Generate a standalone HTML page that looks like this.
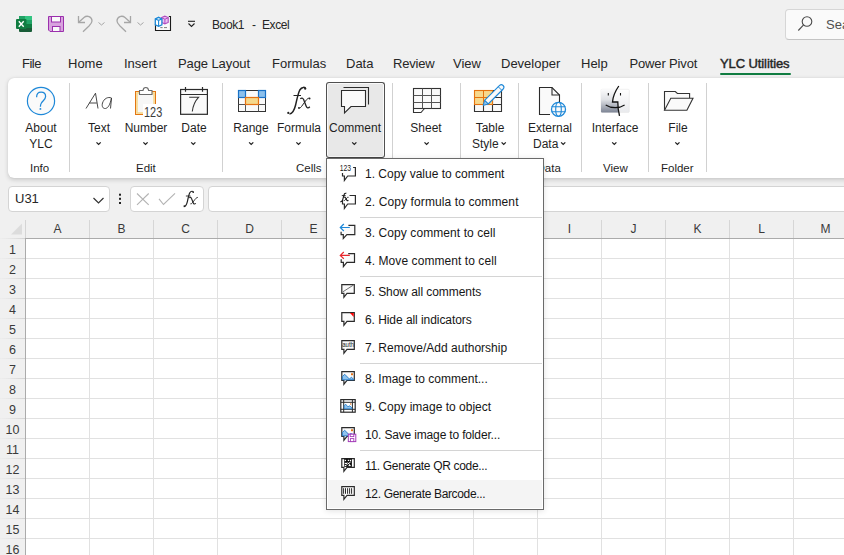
<!DOCTYPE html>
<html><head><meta charset="utf-8">
<style>
*{margin:0;padding:0;box-sizing:border-box}
html,body{width:844px;height:555px;overflow:hidden;background:#f0f0f0;font-family:"Liberation Sans",sans-serif;color:#262626}
.a{position:absolute;white-space:nowrap}
.tab{position:absolute;top:56px;font-size:13px;line-height:16px;color:#262626}
.lbl{position:absolute;font-size:12px;line-height:16px;color:#1f1f1f;text-align:center}
.grp{position:absolute;top:159.8px;font-size:11.5px;line-height:16px;color:#1f1f1f}
.sep{position:absolute;top:83px;width:1px;height:89px;background:#d1d1d1}
.chev{position:absolute;top:141px}
svg{position:absolute;overflow:visible}
#ribbon{position:absolute;left:8px;top:77.5px;width:860px;height:100.5px;background:#fff;border-radius:6px;box-shadow:0 1.5px 4px rgba(0,0,0,0.16),0 0 1px rgba(0,0,0,0.12)}
.hdr{position:absolute;top:221px;font-size:12px;line-height:16px;color:#3a3a3a;text-align:center;width:64px;padding-left:1px}
.rn{position:absolute;left:0;width:25px;font-size:12.5px;line-height:20px;padding-top:2px;text-align:center;color:#3a3a3a}
.mi{position:absolute;left:365px;font-size:12px;line-height:16px;color:#161616}
.msep{position:absolute;left:360px;width:182px;height:1px;background:#d4d4d4}
</style></head><body>

<!-- Title bar -->
<svg style="left:0;top:0" width="844" height="45">
  <!-- excel icon -->
  <rect x="19" y="16" width="13" height="16" rx="1" fill="#185c37"/>
  <rect x="19" y="16" width="13" height="4" fill="#21a366"/>
  <rect x="25" y="16" width="7" height="4" fill="#33c481"/>
  <rect x="19" y="20" width="13" height="4" fill="#107c41"/>
  <rect x="25" y="20" width="7" height="4" fill="#21a366"/>
  <rect x="19" y="24" width="13" height="4" fill="#185c37"/>
  <rect x="25" y="24" width="7" height="4" fill="#107c41"/>
  <rect x="16" y="19" width="10.5" height="10" rx="1" fill="#107c41"/>
  <path d="M18.8 21.3 L23.7 26.7 M23.7 21.3 L18.8 26.7" stroke="#fff" stroke-width="1.4"/>
  <!-- save -->
  <path d="M48.5 16.5 H63.5 V31.5 H50 L48.5 30 Z" fill="#d8a3de" stroke="#9b30ad" stroke-width="1"/>
  <rect x="51.5" y="16.5" width="9" height="5.5" fill="#fafafa" stroke="#9b30ad" stroke-width="1"/>
  <rect x="52.5" y="26.5" width="7.5" height="5" fill="#fafafa" stroke="#9b30ad" stroke-width="1"/>
  <!-- undo -->
  <path d="M78.5 16 V22.5 H85" fill="none" stroke="#a6a6a6" stroke-width="1.3"/>
  <path d="M79 22 L84 17.5 C87 15 92 16.5 92 21 C92 23 90.5 24.5 89 26 L83 31.7" fill="none" stroke="#a6a6a6" stroke-width="1.3"/>
  <path d="M98.5 22.5 L101.5 25 L104.5 22.5" fill="none" stroke="#a6a6a6" stroke-width="1"/>
  <!-- redo -->
  <path d="M130.5 16 V22.5 H124" fill="none" stroke="#a6a6a6" stroke-width="1.3"/>
  <path d="M130 22 L125 17.5 C122 15 117 16.5 117 21 C117 23 118.5 24.5 120 26 L126 31.7" fill="none" stroke="#a6a6a6" stroke-width="1.3"/>
  <path d="M137.5 22.5 L140.5 25 L143.5 22.5" fill="none" stroke="#a6a6a6" stroke-width="1"/>
  <!-- addin icon -->
  <rect x="155.5" y="16.5" width="15" height="14" fill="#fafafa"/>
  <path d="M155.5 24 V30.5 H170.5 V16.5 H168.8" fill="none" stroke="#1a1a1a" stroke-width="1.1"/>
  <path d="M160.3 27.6 H162.6 M164 27.6 H167" stroke="#707070" stroke-width="0.9"/>
  <path d="M161.6 17.6 L164.9 16.2 L168.2 17.6 V22.4 L164.9 23.8 L161.6 22.4 Z" fill="#ecc6f2" stroke="#b04ac0" stroke-width="1.1"/>
  <path d="M164.9 19.2 V23.6 M161.6 17.8 L164.9 19.2 L168.2 17.8" fill="none" stroke="#b04ac0" stroke-width="1"/>
  <path d="M155.3 18.8 L158.6 17.3 L161.9 18.8 V24.9 L158.6 26.4 L155.3 24.9 Z" fill="#ffffff" stroke="#1c88d6" stroke-width="1.3"/>
  <path d="M158.6 20.3 V26.2 M155.3 18.9 L158.6 20.3 L161.9 18.9" fill="none" stroke="#1c88d6" stroke-width="1.1"/>
  <!-- customize -->
  <path d="M188 21.3 H195" stroke="#222" stroke-width="1.1"/>
  <path d="M188.5 23.5 L191.5 26.5 L194.5 23.5" fill="none" stroke="#222" stroke-width="1.1"/>
</svg>
<div class="a" style="left:212px;top:17px;font-size:12px;line-height:16px;color:#262626;letter-spacing:-0.4px"><span style="display:inline-block;width:40px">Book1</span><span style="display:inline-block;width:10px">-</span>Excel</div>

<!-- search -->
<div class="a" style="left:785px;top:8.5px;width:80px;height:31.5px;background:#fafafa;border:1px solid #d6d6d6;border-bottom-color:#c4c4c4;border-radius:4px"></div>
<svg style="left:0;top:0" width="844" height="45">
  <circle cx="807" cy="21.5" r="4.8" fill="none" stroke="#4a4a4a" stroke-width="1.1"/>
  <path d="M803.6 24.9 L798.3 30.5" stroke="#4a4a4a" stroke-width="1.1"/>
</svg>
<div class="a" style="left:826px;top:17px;font-size:13px;line-height:16px;color:#505050">Search</div>

<!-- tabs -->
<div class="tab" style="left:22px;letter-spacing:-0.5px">File</div>
<div class="tab" style="left:68px">Home</div>
<div class="tab" style="left:124px">Insert</div>
<div class="tab" style="left:178px;letter-spacing:-0.1px">Page Layout</div>
<div class="tab" style="left:272px">Formulas</div>
<div class="tab" style="left:346px">Data</div>
<div class="tab" style="left:393px;letter-spacing:-0.2px">Review</div>
<div class="tab" style="left:453px">View</div>
<div class="tab" style="left:501px">Developer</div>
<div class="tab" style="left:581px">Help</div>
<div class="tab" style="left:629.5px;letter-spacing:-0.15px">Power Pivot</div>
<div class="tab" style="left:720px;font-size:13px;letter-spacing:-0.1px;-webkit-text-stroke:0.45px #262626">YLC Utilities</div>
<div class="a" style="left:720px;top:72.5px;width:71px;height:2.6px;border-radius:1.3px;background:#107c41"></div>

<!-- ribbon -->
<div id="ribbon"></div>
<div class="sep" style="left:69px"></div>
<div class="sep" style="left:222px"></div>
<div class="sep" style="left:392px"></div>
<div class="sep" style="left:460px"></div>
<div class="sep" style="left:518px"></div>
<div class="sep" style="left:581px"></div>
<div class="sep" style="left:648px"></div>
<div class="sep" style="left:706px"></div>

<!-- comment button pressed -->
<div class="a" style="left:326px;top:82px;width:59px;height:76px;background:#e8e8e8;border:1px solid #505050;border-bottom:1.4px solid #444;border-radius:3px;box-shadow:inset 0 0 0 1px rgba(255,255,255,0.75)"></div>

<svg style="left:0;top:0" width="844" height="180">
  <!-- about -->
  <circle cx="41" cy="101" r="13.6" fill="#fafafa" stroke="#1e88d8" stroke-width="1.2"/>
  <path d="M36.6 97.3 C36.6 93.9 38.5 92.2 41.1 92.2 C43.8 92.2 45.6 94 45.6 96.6 C45.6 99.4 42.9 100.6 41.4 103 C40.8 104 40.4 105.2 40.4 106.8" fill="none" stroke="#1e88d8" stroke-width="1.25"/>
  <circle cx="40.4" cy="108.9" r="0.95" fill="#1e88d8"/>
  <!-- Aa -->
  <path d="M86 108.5 L95.5 93.2 L98 108.5 M89.3 103 H96.8" fill="none" stroke="#333" stroke-width="0.9"/>
  <path d="M111.5 98 C108 96.5 104 98.5 102.5 103 C101.5 106.5 103 108.8 105.5 108.5 C108 108 110 105 111.5 98 L110.5 108.5" fill="none" stroke="#333" stroke-width="0.9"/>
  <!-- number clipboard -->
  <rect x="135.5" y="91.5" width="20" height="23" fill="#f7f7f7" stroke="#e37612" stroke-width="1"/>
  <rect x="137" y="93" width="17" height="20" fill="none" stroke="#f7d88c" stroke-width="1.7"/>
  <rect x="137.9" y="93.9" width="15.2" height="18.2" fill="#f7f7f7"/>
  <rect x="143" y="104" width="20" height="14" fill="#fff"/>
  <path d="M139.5 94.5 V90.5 H143 C143.2 88.4 144.4 87.5 145.8 87.5 C147.2 87.5 148.4 88.4 148.6 90.5 H152 V94.5 Z" fill="#fff" stroke="#6a6a6a" stroke-width="1.1"/>
  <text x="144" y="117" font-family="Liberation Sans" font-size="13.8" fill="#3c3c3c" textLength="18.2" lengthAdjust="spacingAndGlyphs">123</text>
  <!-- calendar -->
  <rect x="180.6" y="89.5" width="26.8" height="24.8" fill="#fafafa" stroke="#2b2b2b" stroke-width="1.2"/>
  <path d="M180.6 94.5 H207.4 M185.5 87 V91.8 M202.5 87 V91.8" stroke="#2b2b2b" stroke-width="1.2"/>
  <path d="M189.2 97.3 H198.5 C195 101 193 105 192.3 111.5" fill="none" stroke="#333" stroke-width="1.1"/>
  <!-- range -->
  <rect x="238.5" y="90.5" width="27" height="21" fill="#fafafa" stroke="#333" stroke-width="1"/>
  <path d="M245.5 90.5 V111.5 M258.5 90.5 V111.5 M238.5 104.5 H265.5" stroke="#555" stroke-width="1"/>
  <rect x="238.5" y="90.5" width="7" height="7" fill="#8cc0ec" stroke="#1a72c7" stroke-width="1.2"/>
  <rect x="258.5" y="90.5" width="7" height="7" fill="#8cc0ec" stroke="#1a72c7" stroke-width="1.2"/>
  <rect x="245.5" y="97.5" width="13" height="7" fill="#f6d98c" stroke="#e57112" stroke-width="1.2"/>
  <!-- fx -->
  <path d="M305.6 88.9 C305.3 86.8 301.8 86.6 299.8 90 C298 93.5 296.8 100 295.6 105 C294.5 109.5 292.5 113.8 289.5 113.9" fill="none" stroke="#222" stroke-width="1.5"/>
  <circle cx="305.2" cy="88.7" r="1.1" fill="#222"/>
  <circle cx="288.3" cy="112.9" r="1.1" fill="#222"/>
  <path d="M293.5 95.5 H301" stroke="#222" stroke-width="1"/>
  <path d="M300.3 98.8 C301.5 97.6 303 97.8 303.6 99.6 L306.2 106.3 C306.8 108 308.2 108.6 309.8 106.8" fill="none" stroke="#222" stroke-width="1.3"/>
  <path d="M309.7 98.4 C308.5 97.8 307.3 98.6 305.5 101 L301.5 106.5 C300.8 107.6 299.8 108.2 298.8 107.9" fill="none" stroke="#222" stroke-width="1"/>
  <circle cx="309.6" cy="98.5" r="0.9" fill="#222"/>
  <circle cx="298.9" cy="107.9" r="0.9" fill="#222"/>
  <!-- comment icon -->
  <path d="M343.5 87.5 H368.5 V104.5" fill="none" stroke="#2b2b2b" stroke-width="1.1"/>
  <path d="M341.5 90.5 H365.5 V106.5 H351 L344.5 113 V106.5 H341.5 Z" fill="#fafafa" stroke="#2b2b2b" stroke-width="1.1"/>
  <!-- sheet -->
  <rect x="413.5" y="88.5" width="27" height="20" fill="#fafafa" stroke="#333" stroke-width="1.1"/>
  <path d="M422.5 88.5 V108.5 M431.5 88.5 V108.5 M413.5 95.5 H440.5 M413.5 102.5 H440.5" stroke="#555" stroke-width="1"/>
  <path d="M413.5 108.5 V112.5 H421 L424.5 108.5" fill="none" stroke="#333" stroke-width="1.1"/>
  <!-- table style -->
  <rect x="474.5" y="90.5" width="27" height="21" fill="#fafafa"/>
  <path d="M492.5 90.5 H501.5 V111.5 H474.5 V104.5 M483.5 104.5 V111.5 M492.5 90.5 V111.5 M474.5 104.5 H501.5 M492.5 97.5 H501.5" fill="none" stroke="#333" stroke-width="1.1"/>
  <rect x="474.5" y="90.5" width="18" height="14" fill="#f7d88c" stroke="#e5730f" stroke-width="1.1"/>
  <path d="M483.5 90.5 V104.5 M474.5 97.5 H492.5" stroke="#e5730f" stroke-width="1"/>
  <path d="M488.2 104 L484.6 100.4 L499.6 85.4 A2.55 2.55 0 0 1 503.2 89 Z" fill="#fafafa" stroke="#1e88d8" stroke-width="1.1" stroke-linejoin="round"/>
  <path d="M483.2 105.4 L484.6 100.4 L488.2 104 Z" fill="#8cc0ec" stroke="#1e88d8" stroke-width="1" stroke-linejoin="round"/>
  <path d="M498.3 86.8 L501.8 90.3" stroke="#1e88d8" stroke-width="1"/>
  <!-- external data -->
  <path d="M539.5 87.5 H552 L559.5 95 V114.5 H539.5 Z" fill="#fafafa" stroke="none"/>
  <path d="M550 114.5 H539.5 V87.5 H552 L559.5 95 V102" fill="none" stroke="#2b2b2b" stroke-width="1.1" stroke-linejoin="miter"/>
  <path d="M552 87.5 V95 H559.5" fill="none" stroke="#2b2b2b" stroke-width="1.1"/>
  <circle cx="558.5" cy="109.3" r="7" fill="#fafafa" stroke="#1e88d8" stroke-width="1.3"/>
  <ellipse cx="558.5" cy="109.3" rx="2.8" ry="7" fill="none" stroke="#1e88d8" stroke-width="1.1"/>
  <path d="M551.5 106.8 H565.5 M551.5 111.8 H565.5" stroke="#1e88d8" stroke-width="1.1"/>
  <!-- interface finder -->
  <defs>
    <linearGradient id="fgl" x1="0" y1="0" x2="0" y2="1">
      <stop offset="0" stop-color="#fbfbfc"/>
      <stop offset="0.45" stop-color="#dfe1e5"/>
      <stop offset="1" stop-color="#7d8494"/>
    </linearGradient>
    <linearGradient id="fgr" x1="0" y1="0" x2="0" y2="1">
      <stop offset="0" stop-color="#ffffff"/>
      <stop offset="1" stop-color="#e9eaed"/>
    </linearGradient>
  </defs>
  <rect x="601" y="89.3" width="28.3" height="23.1" rx="1" fill="url(#fgr)" stroke="#e2e2e2" stroke-width="0.5"/>
  <path d="M601 90.3 Q601 89.3 602 89.3 H617.3 C614.8 93 613 97.5 612.5 102 H617.8 C617.8 106 618 109 618.6 112.4 H602 Q601 112.4 601 111.4 Z" fill="url(#fgl)"/>
  <path d="M618.8 86 C616 90 613 96 612.5 102 H617.8 C617.8 107 618.3 111 619.5 115.8" fill="none" stroke="#111" stroke-width="1.3"/>
  <path d="M608.3 93 V95.5 M620.5 93 V95.5" stroke="#111" stroke-width="1.1"/>
  <path d="M605.7 105 C611 108.5 619.5 108.5 624.6 105" fill="none" stroke="#111" stroke-width="1.1"/>
  <!-- folder -->
  <path d="M664.5 110.3 V91.5 H675.3 L677.4 93.5 H689.6 V98.2" fill="#fafafa" stroke="#333" stroke-width="1.1"/>
  <path d="M664.5 110.3 L670.8 98.2 H693 L686.9 110.3 Z" fill="#fafafa" stroke="#333" stroke-width="1.1"/>
  <!-- chevrons -->
  <g fill="none" stroke="#1f1f1f" stroke-width="1.3"><path d="M96.5 142.4 L98.6 144.4 L100.7 142.4"/><path d="M143.4 142.4 L145.5 144.4 L147.6 142.4"/><path d="M191.2 142.4 L193.3 144.4 L195.4 142.4"/><path d="M249.1 142.4 L251.2 144.4 L253.3 142.4"/><path d="M296.4 142.4 L298.5 144.4 L300.6 142.4"/><path d="M352.2 142.4 L354.3 144.4 L356.4 142.4"/><path d="M424.5 142.4 L426.6 144.4 L428.7 142.4"/><path d="M501.6 142.4 L503.7 144.4 L505.8 142.4"/><path d="M561.1 142.4 L563.2 144.4 L565.3 142.4"/><path d="M612.2 142.4 L614.3 144.4 L616.4 142.4"/><path d="M675.3 142.4 L677.4 144.4 L679.5 142.4"/></g>
</svg>

<!-- ribbon labels -->
<div class="lbl" style="left:11px;top:119.5px;width:60px">About<br>YLC</div>
<div class="lbl" style="left:69px;top:119.5px;width:60px">Text</div>
<div class="lbl" style="left:116px;top:119.5px;width:60px">Number</div>
<div class="lbl" style="left:164px;top:119.5px;width:60px">Date</div>
<div class="lbl" style="left:221px;top:119.5px;width:60px">Range</div>
<div class="lbl" style="left:269px;top:119.5px;width:60px">Formula</div>
<div class="lbl" style="left:325px;top:119.5px;width:60px">Comment</div>
<div class="lbl" style="left:396px;top:119.5px;width:60px">Sheet</div>
<div class="lbl" style="left:460px;top:119.5px;width:60px">Table</div>
<div class="a" style="left:472px;top:135.5px;font-size:12px;line-height:16px">Style</div>
<div class="lbl" style="left:520px;top:119.5px;width:60px">External</div>
<div class="a" style="left:533px;top:135.5px;font-size:12px;line-height:16px">Data</div>
<div class="lbl" style="left:585px;top:119.5px;width:60px">Interface</div>
<div class="lbl" style="left:648px;top:119.5px;width:60px">File</div>

<div class="grp" style="left:30px">Info</div>
<div class="grp" style="left:136px">Edit</div>
<div class="grp" style="left:296px">Cells</div>
<div class="grp" style="left:536.5px">Data</div>
<div class="grp" style="left:603px">View</div>
<div class="grp" style="left:661px">Folder</div>

<!-- formula bar -->
<div class="a" style="left:8px;top:186px;width:101.5px;height:26px;background:#fff;border:1px solid #d4d4d4;border-radius:4px"></div>
<div class="a" style="left:15px;top:191px;font-size:13px;line-height:16px;color:#262626">U31</div>
<svg style="left:0;top:0" width="844" height="240">
  <path d="M93.5 198 L98.5 203 L103.5 198" fill="none" stroke="#333" stroke-width="1.2"/>
  <rect x="119" y="193.7" width="2" height="2" fill="#222"/>
  <rect x="119" y="197.8" width="2" height="2" fill="#222"/>
  <rect x="119" y="202" width="2" height="2" fill="#222"/>
</svg>
<div class="a" style="left:130px;top:186px;width:73.5px;height:26px;border:1px solid #d4d4d4;border-radius:4px;background:#fff"></div>
<svg style="left:0;top:0" width="844" height="240">
  <path d="M137 193.5 L148.7 204.8 M148.7 193.5 L137 204.8" stroke="#b3b3b3" stroke-width="1.1"/>
  <path d="M159 198.8 L163.5 204.5 L175 193.3" fill="none" stroke="#b3b3b3" stroke-width="1.1"/>
  <path d="M193.5 192.3 C193.2 190.8 191 190.8 189.8 192.8 C188.7 194.8 188 198.8 187.3 201.8 C186.6 204.5 185.5 206.6 183.8 206.6" fill="none" stroke="#222" stroke-width="1.2"/>
  <circle cx="193.2" cy="192.2" r="0.8" fill="#222"/><circle cx="184.3" cy="206" r="0.8" fill="#222"/>
  <path d="M185.9 196 H190.5" stroke="#222" stroke-width="0.9"/>
  <path d="M189.3 197.8 C190 197.1 191 197.2 191.4 198.3 L193.3 203 C193.7 204.1 194.6 204.4 195.8 203.4" fill="none" stroke="#222" stroke-width="1.1"/>
  <path d="M198 197.6 C197.2 197.2 196.4 197.7 195.2 199.2 L192.3 202.9 C191.8 203.6 191.1 204 190.4 203.8" fill="none" stroke="#222" stroke-width="0.9"/>
</svg>
<div class="a" style="left:208px;top:186px;width:660px;height:26px;border:1px solid #d4d4d4;border-radius:4px;background:#fff"></div>

<!-- grid -->
<div class="a" style="left:25px;top:238px;width:819px;height:317px;background:#fff"></div>
<svg style="left:0;top:0" width="844" height="555" id="grid"><defs><linearGradient id="rg" gradientUnits="userSpaceOnUse" x1="0" y1="0" x2="25" y2="0"><stop offset="0" stop-color="#e2e2e2" stop-opacity="0.2"/><stop offset="1" stop-color="#d2d2d2"/></linearGradient></defs><path d="M89.5 238 V555" stroke="#e1e1e1" stroke-width="1"/><path d="M89.5 220 V238" stroke="#d6d6d6" stroke-width="1"/><path d="M153.5 238 V555" stroke="#e1e1e1" stroke-width="1"/><path d="M153.5 220 V238" stroke="#d6d6d6" stroke-width="1"/><path d="M217.5 238 V555" stroke="#e1e1e1" stroke-width="1"/><path d="M217.5 220 V238" stroke="#d6d6d6" stroke-width="1"/><path d="M281.5 238 V555" stroke="#e1e1e1" stroke-width="1"/><path d="M281.5 220 V238" stroke="#d6d6d6" stroke-width="1"/><path d="M345.5 238 V555" stroke="#e1e1e1" stroke-width="1"/><path d="M345.5 220 V238" stroke="#d6d6d6" stroke-width="1"/><path d="M409.5 238 V555" stroke="#e1e1e1" stroke-width="1"/><path d="M409.5 220 V238" stroke="#d6d6d6" stroke-width="1"/><path d="M473.5 238 V555" stroke="#e1e1e1" stroke-width="1"/><path d="M473.5 220 V238" stroke="#d6d6d6" stroke-width="1"/><path d="M537.5 238 V555" stroke="#e1e1e1" stroke-width="1"/><path d="M537.5 220 V238" stroke="#d6d6d6" stroke-width="1"/><path d="M601.5 238 V555" stroke="#e1e1e1" stroke-width="1"/><path d="M601.5 220 V238" stroke="#d6d6d6" stroke-width="1"/><path d="M665.5 238 V555" stroke="#e1e1e1" stroke-width="1"/><path d="M665.5 220 V238" stroke="#d6d6d6" stroke-width="1"/><path d="M729.5 238 V555" stroke="#e1e1e1" stroke-width="1"/><path d="M729.5 220 V238" stroke="#d6d6d6" stroke-width="1"/><path d="M793.5 238 V555" stroke="#e1e1e1" stroke-width="1"/><path d="M793.5 220 V238" stroke="#d6d6d6" stroke-width="1"/><path d="M857.5 238 V555" stroke="#e1e1e1" stroke-width="1"/><path d="M857.5 220 V238" stroke="#d6d6d6" stroke-width="1"/><path d="M25 258.5 H844" stroke="#e1e1e1" stroke-width="1"/><path d="M0 258.5 H25" stroke="url(#rg)" stroke-width="1"/><path d="M25 278.5 H844" stroke="#e1e1e1" stroke-width="1"/><path d="M0 278.5 H25" stroke="url(#rg)" stroke-width="1"/><path d="M25 298.5 H844" stroke="#e1e1e1" stroke-width="1"/><path d="M0 298.5 H25" stroke="url(#rg)" stroke-width="1"/><path d="M25 318.5 H844" stroke="#e1e1e1" stroke-width="1"/><path d="M0 318.5 H25" stroke="url(#rg)" stroke-width="1"/><path d="M25 338.5 H844" stroke="#e1e1e1" stroke-width="1"/><path d="M0 338.5 H25" stroke="url(#rg)" stroke-width="1"/><path d="M25 358.5 H844" stroke="#e1e1e1" stroke-width="1"/><path d="M0 358.5 H25" stroke="url(#rg)" stroke-width="1"/><path d="M25 378.5 H844" stroke="#e1e1e1" stroke-width="1"/><path d="M0 378.5 H25" stroke="url(#rg)" stroke-width="1"/><path d="M25 398.5 H844" stroke="#e1e1e1" stroke-width="1"/><path d="M0 398.5 H25" stroke="url(#rg)" stroke-width="1"/><path d="M25 418.5 H844" stroke="#e1e1e1" stroke-width="1"/><path d="M0 418.5 H25" stroke="url(#rg)" stroke-width="1"/><path d="M25 438.5 H844" stroke="#e1e1e1" stroke-width="1"/><path d="M0 438.5 H25" stroke="url(#rg)" stroke-width="1"/><path d="M25 458.5 H844" stroke="#e1e1e1" stroke-width="1"/><path d="M0 458.5 H25" stroke="url(#rg)" stroke-width="1"/><path d="M25 478.5 H844" stroke="#e1e1e1" stroke-width="1"/><path d="M0 478.5 H25" stroke="url(#rg)" stroke-width="1"/><path d="M25 498.5 H844" stroke="#e1e1e1" stroke-width="1"/><path d="M0 498.5 H25" stroke="url(#rg)" stroke-width="1"/><path d="M25 518.5 H844" stroke="#e1e1e1" stroke-width="1"/><path d="M0 518.5 H25" stroke="url(#rg)" stroke-width="1"/><path d="M25 538.5 H844" stroke="#e1e1e1" stroke-width="1"/><path d="M0 538.5 H25" stroke="url(#rg)" stroke-width="1"/><path d="M25 558.5 H844" stroke="#e1e1e1" stroke-width="1"/><path d="M0 558.5 H25" stroke="url(#rg)" stroke-width="1"/><path d="M25 238.5 H844" stroke="#ababab" stroke-width="1"/><path d="M0 238.5 H25" stroke="url(#rg)" stroke-width="1"/><path d="M25.5 220 V238" stroke="#d4d4d4" stroke-width="1"/><path d="M25.5 238 V555" stroke="#ababab" stroke-width="1"/><path d="M22 223.5 V234.5 H11 Z" fill="#dcdcdc"/></svg>
<div class="hdr" style="left:25px">A</div>
<div class="hdr" style="left:89px">B</div>
<div class="hdr" style="left:153px">C</div>
<div class="hdr" style="left:217px">D</div>
<div class="hdr" style="left:281px">E</div>
<div class="hdr" style="left:537px">I</div>
<div class="hdr" style="left:601px">J</div>
<div class="hdr" style="left:665px">K</div>
<div class="hdr" style="left:729px">L</div>
<div class="hdr" style="left:793px">M</div>
<div id="rows"><div class="rn" style="top:238px">1</div><div class="rn" style="top:258px">2</div><div class="rn" style="top:278px">3</div><div class="rn" style="top:298px">4</div><div class="rn" style="top:318px">5</div><div class="rn" style="top:338px">6</div><div class="rn" style="top:358px">7</div><div class="rn" style="top:378px">8</div><div class="rn" style="top:398px">9</div><div class="rn" style="top:418px">10</div><div class="rn" style="top:438px">11</div><div class="rn" style="top:458px">12</div><div class="rn" style="top:478px">13</div><div class="rn" style="top:498px">14</div><div class="rn" style="top:518px">15</div><div class="rn" style="top:538px">16</div></div>

<!-- menu -->
<div class="a" style="left:326px;top:158px;width:218px;height:351.5px;background:#fff;border:1px solid #6a6a6a;box-shadow:0 1px 6px rgba(0,0,0,0.12)"></div>
<div class="a" style="left:327.5px;top:479.5px;width:214.5px;height:28px;background:#f4f4f4"></div>
<div class="msep" style="top:217px"></div>
<div class="msep" style="top:276px"></div>
<div class="msep" style="top:363px"></div>
<div class="msep" style="top:450px"></div>
<div class="mi" style="top:165.5px">1. Copy value to comment</div>
<div class="mi" style="top:193.5px;letter-spacing:0.11px">2. Copy formula to comment</div>
<div class="mi" style="top:224.5px;letter-spacing:0.08px">3. Copy comment to cell</div>
<div class="mi" style="top:252.5px;letter-spacing:0.07px">4. Move comment to cell</div>
<div class="mi" style="top:283.5px;letter-spacing:-0.06px">5. Show all comments</div>
<div class="mi" style="top:311.5px;letter-spacing:-0.06px">6. Hide all indicators</div>
<div class="mi" style="top:339.5px">7. Remove/Add authorship</div>
<div class="mi" style="top:370.5px">8. Image to comment...</div>
<div class="mi" style="top:398.5px">9. Copy image to object</div>
<div class="mi" style="top:426.5px;letter-spacing:-0.16px">10. Save image to folder...</div>
<div class="mi" style="top:457.5px;letter-spacing:-0.33px">11. Generate QR code...</div>
<div class="mi" style="top:485.5px;letter-spacing:-0.34px">12. Generate Barcode...</div>

<svg style="left:0;top:0" width="844" height="555" id="micons"><path d="M342.5 173 V176 H344.4 V180.4 L347.7 176 H355.4 V167.5 H353.1" fill="none" stroke="#2b2b2b" stroke-width="1.2"/><text x="339.8" y="171" font-family="Liberation Sans" font-size="8.4" fill="#1a1a1a" textLength="11.3" lengthAdjust="spacingAndGlyphs">123</text><path d="M342.5 201 V204 H344.4 V208.4 L347.7 204 H355.4 V195.5 H349.5" fill="none" stroke="#2b2b2b" stroke-width="1.2"/><path d="M346.4 193.3 C345.2 192.9 344.4 193.6 343.9 195.3 L342.5 200.3 C342.1 201.4 341.3 201.9 340.2 201.7" fill="none" stroke="#1a1a1a" stroke-width="1.1"/><path d="M341.8 195.6 H345.6" stroke="#1a1a1a" stroke-width="0.9"/><path d="M344 197.4 C344.8 196.9 345.4 197.2 345.7 198 L346.7 200 C347 200.7 347.6 200.8 348.4 200.2" fill="none" stroke="#1a1a1a" stroke-width="1.1"/><path d="M348.6 197.4 C348 197 347.4 197.3 346.8 198 L345.3 199.9 C344.9 200.5 344.3 200.7 343.7 200.5" fill="none" stroke="#1a1a1a" stroke-width="0.9"/><path d="M341.1 231.7 V234.6 H343.3 V238.5 L346.9 234.6 H354.8 V225.4 H348.4" fill="#fafafa" stroke="#2b2b2b" stroke-width="1.2"/><path d="M340.2 227.5 H349.8 M343.8 224 L340.3 227.5 L343.8 231" fill="none" stroke="#1e88d8" stroke-width="1.2"/><path d="M341.2 259.2 V262.4 H343.4 V266.5 L346.9 262.4 H354.5 V253.6 H348.2" fill="#fafafa" stroke="#2b2b2b" stroke-width="1.2"/><path d="M340.2 255.4 H349.8 M343.8 252 L340.3 255.4 L343.8 258.8" fill="none" stroke="#e8262b" stroke-width="1.2"/><path d="M341.8 284.7 H354.3 V293.3 H347 L343.9 297.3 V293.3 H341.8 Z" fill="#fafafa" stroke="#2b2b2b" stroke-width="1.2" stroke-linejoin="miter"/><path d="M342.6 292 L353.5 285" stroke="#707070" stroke-width="1"/><path d="M341.8 312.7 H354.3 V321.3 H347 L343.9 325.3 V321.3 H341.8 Z" fill="#fafafa" stroke="#2b2b2b" stroke-width="1.2" stroke-linejoin="miter"/><path d="M350 312.9 H353.7 V317 Z" fill="#ff0000"/><path d="M341.8 340.7 H354.3 V349.3 H347 L343.9 353.3 V349.3 H341.8 Z" fill="#fafafa" stroke="#2b2b2b" stroke-width="1.2" stroke-linejoin="miter"/><text x="342.2" y="347" font-family="Liberation Sans" font-size="7.6" fill="#222" textLength="11.8" lengthAdjust="spacingAndGlyphs">auth</text><path d="M341.8 371.7 H354.3 V380.3 H347 L343.9 384.3 V380.3 H341.8 Z" fill="#fafafa" stroke="#2b2b2b" stroke-width="1.2" stroke-linejoin="miter"/><path d="M342.4 376.5 L344.7 374.3 L349.4 379 L351.5 377.2 L353.8 379.5 V379.8 H342.4 Z" fill="#90c4ef" stroke="#1e78c8" stroke-width="0.9"/><rect x="351" y="373.3" width="2" height="1.9" fill="#e46f13"/><rect x="340.8" y="399.6" width="14.4" height="12.6" fill="#fff" stroke="#2b2b2b" stroke-width="1.2"/><path d="M343.7 399.6 V412.2 M352.4 399.6 V412.2 M340.8 402.3 H355.2 M340.8 409.3 H355.2" stroke="#2b2b2b" stroke-width="1"/><path d="M344.2 405.5 L345.8 404.3 L347.8 406.8 L349.8 405.8 L351.9 408 V408.8 H344.2 Z" fill="#90c4ef" stroke="#1e78c8" stroke-width="0.8"/><circle cx="350.7" cy="404" r="0.7" fill="#e46f13"/><path d="M341.8 427.7 H354.3 V436.3 H347 L343.9 440.3 V436.3 H341.8 Z" fill="#fafafa" stroke="#2b2b2b" stroke-width="1.2" stroke-linejoin="miter"/><path d="M342.4 432.5 L344.7 430.3 L349 434.6 L351 433.5 L353.5 435 V435.8 H342.4 Z" fill="#90c4ef" stroke="#1e78c8" stroke-width="0.9"/><rect x="351" y="429.3" width="2" height="1.9" fill="#e46f13"/><rect x="348.3" y="434.2" width="7.5" height="7.4" fill="#fff" stroke="#a43cb8" stroke-width="1"/><rect x="350.2" y="434.2" width="3.6" height="2.4" fill="#fff" stroke="#a43cb8" stroke-width="0.9"/><rect x="350.4" y="438.6" width="3.4" height="3" fill="#fff" stroke="#a43cb8" stroke-width="0.9"/><path d="M341.8 458.7 H354.3 V467.3 H347 L343.9 471.3 V467.3 H341.8 Z" fill="#fff" stroke="#2b2b2b" stroke-width="1.2" stroke-linejoin="miter"/><rect x="344.2" y="458.6" width="7.7" height="8.3" fill="#0a0a0a"/><g fill="#fff"><rect x="344.8" y="459.8" width="1.3" height="1.3"/><rect x="347.8" y="459.8" width="1.3" height="1.3"/><rect x="349.8" y="459.8" width="1.3" height="1.3"/><rect x="344.8" y="462.8" width="2.2" height="1.2"/><rect x="344.8" y="464.9" width="1.5" height="1.2"/><rect x="348.6" y="464.9" width="2" height="1.2"/></g><path d="M346.5 464.8 L350.8 461.8 M347.5 462.6 L350.2 465" stroke="#fff" stroke-width="0.9"/><path d="M341.8 486.7 H354.3 V495.3 H347 L343.9 499.3 V495.3 H341.8 Z" fill="#fff" stroke="#2b2b2b" stroke-width="1.2" stroke-linejoin="miter"/><path d="M343.6 488.2 V493.8 M345.5 488.2 V493.8 M347.6 488.2 V493.8 M349.6 488.2 V493.8 M351.6 488.2 V493.8" stroke="#111" stroke-width="0.9"/></svg>
</body></html>
